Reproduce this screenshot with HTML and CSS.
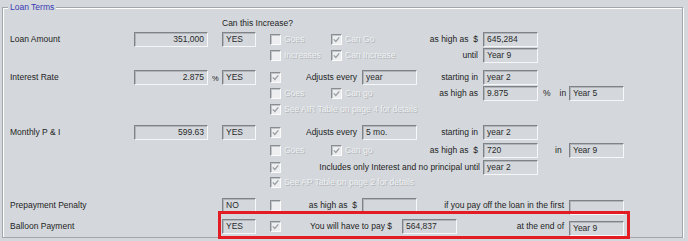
FILE: index.html
```html
<!DOCTYPE html>
<html lang="en">
<head>
<meta charset="UTF-8">
<link rel="stylesheet" href="styles.css">
<title>Loan Terms</title>
</head>
<body>
<fieldset class="terms">
  <legend>Loan Terms</legend>

  <div class="row head"><span class="c4-10">Can this Increase?</span></div>

  <div class="row r1">
    <span class="label">Loan Amount</span>
    <span class="box num c2">351,000</span>
    <span class="box c4">YES</span>
    <span class="check dim c6"><i class="cb"></i>Goes</span>
    <span class="check dim c7-9"><i class="cb"><svg viewBox="0 0 9 9"><path d="M1.8 4.4l2 2.1 3.5-4.2"/></svg></i>Can Go</span>
    <span class="cap c9">as high as&nbsp; $</span>
    <span class="box c10">645,284</span>
  </div>

  <div class="row r1b">
    <span class="check dim c6"><i class="cb"></i>Increases</span>
    <span class="check dim c7-9"><i class="cb"><svg viewBox="0 0 9 9"><path d="M1.8 4.4l2 2.1 3.5-4.2"/></svg></i>Can Increase</span>
    <span class="cap c9">until</span>
    <span class="box c10">Year 9</span>
  </div>

  <div class="row r2">
    <span class="label">Interest Rate</span>
    <span class="box num c2">2.875</span>
    <span class="pct c3">%</span>
    <span class="box c4">YES</span>
    <span class="check c6-8"><i class="cb"><svg viewBox="0 0 9 9"><path d="M1.8 4.4l2 2.1 3.5-4.2"/></svg></i><span class="push">Adjusts every</span></span>
    <span class="box c8">year</span>
    <span class="cap c9">starting in</span>
    <span class="box c10">year 2</span>
  </div>

  <div class="row r2b">
    <span class="check dim c6"><i class="cb"></i>Goes</span>
    <span class="check dim c7-9"><i class="cb"><svg viewBox="0 0 9 9"><path d="M1.8 4.4l2 2.1 3.5-4.2"/></svg></i>Can go</span>
    <span class="cap c9">as high as</span>
    <span class="box c10">9.875</span>
    <span class="unit c11"><span>%</span><span>in</span></span>
    <span class="box c12">Year 5</span>
  </div>

  <div class="row r2c">
    <span class="check dim c6-13"><i class="cb"><svg viewBox="0 0 9 9"><path d="M1.8 4.4l2 2.1 3.5-4.2"/></svg></i>See AIR Table on page 4 for details</span>
  </div>

  <div class="row r3">
    <span class="label">Monthly P &amp; I</span>
    <span class="box num c2">599.63</span>
    <span class="box c4">YES</span>
    <span class="check c6-8"><i class="cb"><svg viewBox="0 0 9 9"><path d="M1.8 4.4l2 2.1 3.5-4.2"/></svg></i><span class="push">Adjusts every</span></span>
    <span class="box c8">5 mo.</span>
    <span class="cap c9">starting in</span>
    <span class="box c10">year 2</span>
  </div>

  <div class="row r3b">
    <span class="check dim c6"><i class="cb"></i>Goes</span>
    <span class="check dim c7-9"><i class="cb"><svg viewBox="0 0 9 9"><path d="M1.8 4.4l2 2.1 3.5-4.2"/></svg></i>Can go</span>
    <span class="cap c9">as high as&nbsp; $</span>
    <span class="box c10">720</span>
    <span class="unit solo c11"><span>in</span></span>
    <span class="box c12">Year 9</span>
  </div>

  <div class="row r3c">
    <span class="check c6-10"><i class="cb"><svg viewBox="0 0 9 9"><path d="M1.8 4.4l2 2.1 3.5-4.2"/></svg></i><span class="push tight">Includes only Interest and no principal until</span></span>
    <span class="box c10">year 2</span>
  </div>

  <div class="row r3d">
    <span class="check dim c6-13"><i class="cb"><svg viewBox="0 0 9 9"><path d="M1.8 4.4l2 2.1 3.5-4.2"/></svg></i>See AP Table on page 2 for details</span>
  </div>

  <div class="row r4">
    <span class="label">Prepayment Penalty</span>
    <span class="box c4">NO</span>
    <span class="check c6-8"><i class="cb"></i><span class="push">as high as&nbsp; $</span></span>
    <span class="box c8"></span>
    <span class="cap c9-12">if you pay off the loan in the first</span>
    <span class="box c12 low"></span>
  </div>

  <div class="row balloon">
    <span class="label">Balloon Payment</span>
    <span class="box c4">YES</span>
    <span class="check c6"><i class="cb"><svg viewBox="0 0 9 9"><path d="M1.8 4.4l2 2.1 3.5-4.2"/></svg></i><span class="push wide">You will have to pay $</span></span>
    <span class="box b-pay">564,837</span>
    <span class="cap b-end">at the end of</span>
    <span class="box b-year low">Year 9</span>
  </div>
</fieldset>

<div class="callout"></div>
</body>
</html>
```

FILE: styles.css
```css
body {
  margin: 0;
  background: #d4d8dc;
  font-family: "Liberation Sans", Arial, sans-serif;
  font-size: 8.5px;
  color: #1e1e1e;
}
.terms {
  margin: 2px 5px 0 2px;
  padding: 0 7px 5px 7px;
  border: 1px solid #a3a7ab;
  box-shadow: inset 1px 1px 0 #fff, 1px 1px 0 #fff;
}
.terms legend {
  margin-left: -2px;
  padding: 0 2px;
  line-height: 11px;
  color: #3838b4;
  background: #d4d8dc;
}
.row {
  display: grid;
  grid-template-columns: 124px 74px 14px 34px 14px 61px 31px 55px 66px 55px 31px 55px;
  height: 15px;
  align-items: center;
  line-height: 15px;
  white-space: nowrap;
}
.head { height: 11px; line-height: 11px; margin-top: 5px; }
.r1 { margin-top: 3px; }
.r1b { margin-top: 1px; }
.r2 { margin-top: 5px; }
.r2b { margin-top: 3px; }
.r2c { margin-top: 1px; }
.r3 { margin-top: 8px; }
.r3b { margin-top: 3px; }
.r3c { margin-top: 2px; }
.r3d { margin-top: 0; }
.r4 { margin-top: 6px; }
.balloon {
  margin-top: 6px;
  grid-template-columns: 124px 74px 14px 34px 14px 132px 55px 112px 55px;
}

.label { grid-column: 1; }
.c2 { grid-column: 2; }
.c3 { grid-column: 3; }
.c4 { grid-column: 4; }
.c4-10 { grid-column: 4 / 10; }
.c6 { grid-column: 6; }
.c6-8 { grid-column: 6 / 8; }
.c6-10 { grid-column: 6 / 10; }
.c6-13 { grid-column: 6 / 13; }
.c7-9 { grid-column: 7 / 9; }
.c8 { grid-column: 8; }
.c9 { grid-column: 9; }
.c9-12 { grid-column: 9 / 12; }
.c10 { grid-column: 10; }
.c11 { grid-column: 11; }
.c12 { grid-column: 12; }
.b-pay { grid-column: 7; }
.b-end { grid-column: 8; padding-right: 9px; }
.b-year { grid-column: 9; }

.box {
  box-sizing: border-box;
  height: 15px;
  line-height: 13px;
  padding: 0 3px;
  border: 1px solid;
  border-color: #7f8387 #f6f7f8 #f6f7f8 #7f8387;
  box-shadow: inset 1px 1px 0 #b2b5b9;
  color: #2a2a2a;
}
.box.num { text-align: right; }
.box.low { margin-top: 4px; }

.cap {
  text-align: right;
  padding-right: 5px;
}
.pct {
  font-size: 7.5px;
  padding: 3px 0 0 4px;
}
.unit {
  display: flex;
  gap: 9px;
  padding-left: 5px;
  color: #1e1e1e;
}
.unit.solo { padding-left: 17px; }

.check {
  display: flex;
  align-items: center;
}
.push {
  margin-left: auto;
  padding-right: 5px;
}
.push.tight { padding-right: 3px; }
.push.wide { padding-right: 10px; }

.cb {
  box-sizing: border-box;
  width: 11px;
  height: 11px;
  margin-right: 3px;
  flex: none;
  border: 1px solid;
  border-color: #8a8e92 #fbfbfc #fbfbfc #8a8e92;
  box-shadow: inset 1px 1px 0 #c3c6c9;
  background: #eceef0;
}
.cb svg {
  display: block;
  width: 9px;
  height: 9px;
  fill: none;
  stroke: #9a9ea2;
  stroke-width: 1.3;
}
.dim {
  color: #eef0f2;
  text-shadow: 1px 1px 0 #b3b6b9;
}

.callout {
  position: absolute;
  left: 218px;
  top: 211px;
  width: 412px;
  height: 28px;
  box-sizing: border-box;
  border: 3px solid #e31b23;
}
```
